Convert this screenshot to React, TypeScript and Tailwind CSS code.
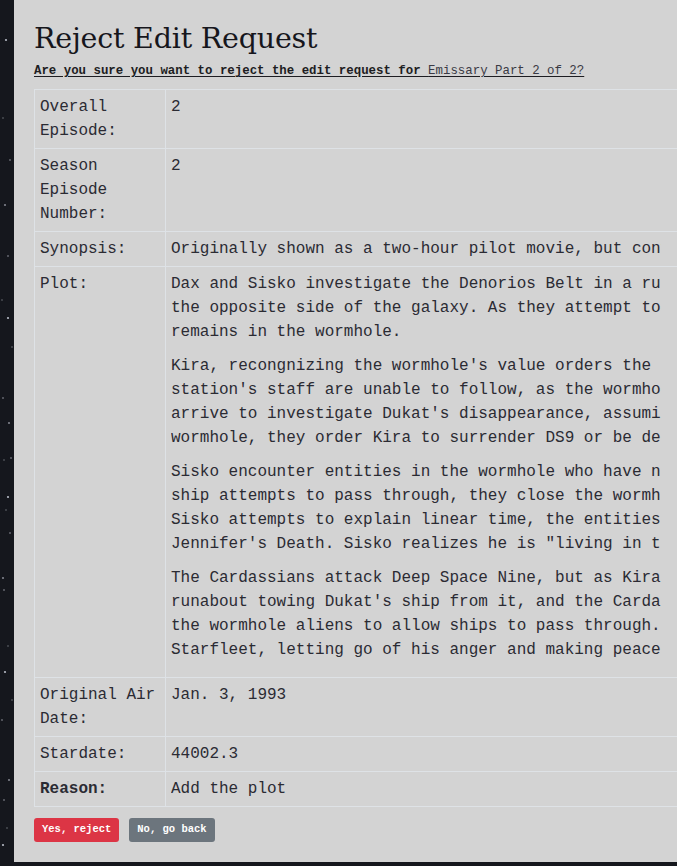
import React from "react";

const mono = "font-['Liberation_Mono','DejaVu_Sans_Mono',monospace]";

const plot: string[][] = [
  [
    "Dax and Sisko investigate the Denorios Belt in a runabout and discover a stable wormhole leading to",
    "the opposite side of the galaxy. As they attempt to return, the runabout is pulled back and Sisko",
    "remains in the wormhole.",
  ],
  [
    "Kira, recongnizing the wormhole's value orders the station moved to the mouth of the wormhole. The",
    "station's staff are unable to follow, as the wormhole has closed behind Sisko. The Cardassians",
    "arrive to investigate Dukat's disappearance, assuming the Federation is hiding something in the",
    "wormhole, they order Kira to surrender DS9 or be destroyed.",
  ],
  [
    "Sisko encounter entities in the wormhole who have no understanding of linear time. When Dukat's",
    "ship attempts to pass through, they close the wormhole, believing it to be a threat. When",
    "Sisko attempts to explain linear time, the entities keep returning him to the moment of",
    "Jennifer's Death. Sisko realizes he is \"living in the past\" and has not let go of his loss.",
  ],
  [
    "The Cardassians attack Deep Space Nine, but as Kira prepares to surrender, the wormhole opens, a",
    "runabout towing Dukat's ship from it, and the Cardassians withdraw. Sisko has convinced",
    "the wormhole aliens to allow ships to pass through. He decides to stay on with",
    "Starfleet, letting go of his anger and making peace with his past.",
  ],
];

const stars = [
  [6, 40], [3, 118], [10, 160], [5, 205], [8, 256], [2, 300], [8, 318], [12, 347], [3, 398],
  [9, 423], [11, 458], [4, 460], [8, 497], [6, 510], [10, 533], [3, 578], [4, 590], [8, 646],
  [5, 672], [12, 700], [2, 720], [9, 780], [4, 800], [7, 828], [3, 845],
];

function Row({ label, children, bold }: { label: string; children: React.ReactNode; bold?: boolean }) {
  return (
    <tr>
      <td
        className={`w-[131px] border border-[#dee2e6] p-[5px] align-top text-[16px] leading-[24px] text-[#2b2b33] ${
          bold ? "font-bold" : ""
        }`}
      >
        {label}
      </td>
      <td className="border border-[#dee2e6] p-[5px] align-top text-[16px] leading-[24px] text-[#2b2b33]">
        {/* the value column only shows 51 characters before it is cut off */}
        <div className="w-[490px] overflow-hidden">{children}</div>
      </td>
    </tr>
  );
}

export default function App() {
  return (
    <div className="relative flex h-[866px] w-[677px] overflow-hidden bg-[#15171d]">
      <svg className="absolute left-0 top-0" width="14" height="866">
        {stars.map(([x, y], i) => (
          <circle key={i} cx={x} cy={y} r={i % 3 === 0 ? 1.1 : 0.7} fill="#c8ccd6" opacity={i % 2 ? 0.6 : 0.9} />
        ))}
      </svg>
      <div className={`ml-[14px] h-[862px] w-[1300px] shrink-0 bg-[#d3d3d3] pl-[20px] pt-[19px] ${mono}`}>
        <h1 className="font-['DejaVu_Serif',serif] text-[28.5px] leading-[40px] tracking-[-0.2px] text-[#16161c]">
          Reject Edit Request
        </h1>
        <p className="mt-[3px] text-[12.4px] leading-[18px] text-[#1d1d22] underline underline-offset-2">
          <span className="font-bold">Are you sure you want to reject the edit request for </span>
          <span className="text-[#3a3a44]">Emissary Part 2 of 2?</span>
        </p>
        <table className="mt-[9px] w-[1260px] border-collapse">
          <tbody>
            <Row label="Overall Episode:">2</Row>
            <Row label="Season Episode Number:">2</Row>
            <Row label="Synopsis:">
              <span className="whitespace-nowrap">
                Originally shown as a two-hour pilot movie, but conventionally split into two parts for syndication.
              </span>
            </Row>
            <Row label="Plot:">
              {plot.map((para, i) => (
                <p key={i} className="mb-[10px]">
                  {para.map((line, j) => (
                    <span key={j} className="block whitespace-nowrap">
                      {line}
                    </span>
                  ))}
                </p>
              ))}
            </Row>
            <Row label="Original Air Date:">Jan. 3, 1993</Row>
            <Row label="Stardate:">44002.3</Row>
            <Row label="Reason:" bold>
              Add the plot
            </Row>
          </tbody>
        </table>
        <div className="mt-[11px] flex gap-[10px]">
          <button className="h-[24px] rounded-[3px] bg-[#dc3545] px-[8px] text-[10.5px] font-bold text-white">
            Yes, reject
          </button>
          <button className="h-[24px] rounded-[3px] bg-[#6c757d] px-[8px] text-[10.5px] font-bold text-white">
            No, go back
          </button>
        </div>
      </div>
    </div>
  );
}
